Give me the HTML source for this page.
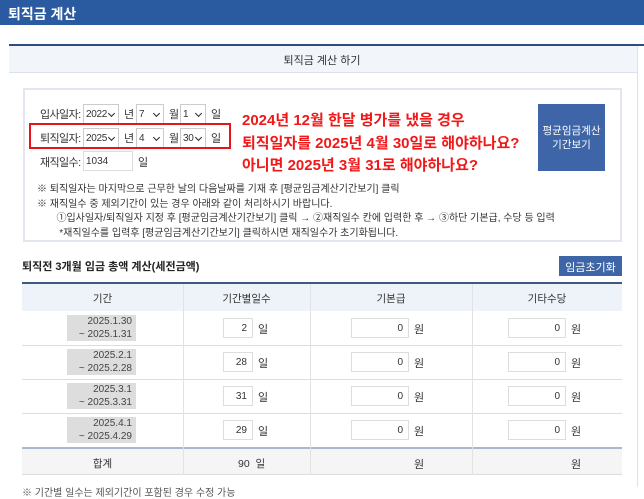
<!DOCTYPE html><html><head><meta charset="utf-8"><style>
*{margin:0;padding:0;box-sizing:border-box}
body{width:644px;height:487px;overflow:hidden;background:#fff;font-family:"Liberation Sans","Noto Sans CJK KR",sans-serif;color:#333;position:relative;font-size:11px}
.a{position:absolute;white-space:nowrap}
.lb{font-size:11px;letter-spacing:-0.6px}
.sel{position:absolute;height:20px;border:1px solid #ccc;background:#fff;font-size:10px;padding:4px 0 0 2px;color:#333;letter-spacing:-0.3px}
.sel:after{content:"";position:absolute;right:4px;top:6px;width:4px;height:4px;border-right:1.5px solid #222;border-bottom:1.5px solid #222;transform:rotate(45deg)}
.inp{position:absolute;height:20px;border:1px solid #ddd;background:#fff;text-align:right;padding:4px 5px 0 0;font-size:10px}
.pd{position:absolute;background:#ddd;font-size:10px;text-align:right;padding-right:4px;color:#444}
</style></head><body>
<div class="a" style="left:0;top:0;width:644px;height:25px;background:#2a5ba0"></div>
<div class="a" style="left:8px;top:4px;color:#fff;font-size:14px;font-weight:bold">퇴직금 계산</div>
<div class="a" style="left:9px;top:44px;width:635px;height:2px;background:#2c4e7e"></div>
<div class="a" style="left:9px;top:46px;width:628px;height:27px;background:#f2f5fa;border-bottom:1px solid #dde2ea"></div>
<div class="a" style="left:637px;top:46px;width:1px;height:441px;background:#dde2ea"></div>
<div class="a" style="left:0;top:52px;width:644px;text-align:center;font-size:11px">퇴직금 계산 하기</div>
<div class="a" style="left:23px;top:88px;width:599px;height:154px;border:2px solid #e2e6ef"></div>
<div class="a lb" style="left:40px;top:106px">입사일자:</div>
<div class="sel" style="left:83px;top:104px;width:36px">2022</div><div class="a" style="left:124px;top:106px">년</div>
<div class="sel" style="left:136px;top:104px;width:28px">7</div><div class="a" style="left:169px;top:106px">월</div>
<div class="sel" style="left:180px;top:104px;width:26px">1</div><div class="a" style="left:211px;top:106px">일</div>
<div class="a lb" style="left:40px;top:130px">퇴직일자:</div>
<div class="sel" style="left:83px;top:128px;width:36px">2025</div><div class="a" style="left:124px;top:130px">년</div>
<div class="sel" style="left:136px;top:128px;width:28px">4</div><div class="a" style="left:169px;top:130px">월</div>
<div class="sel" style="left:180px;top:128px;width:26px">30</div><div class="a" style="left:211px;top:130px">일</div>
<div class="a" style="left:29px;top:123px;width:202px;height:26px;border:2px solid #e8141c"></div>
<div class="a lb" style="left:40px;top:154px">재직일수:</div>
<div class="a" style="left:83px;top:151px;width:50px;height:20px;border:1px solid #ddd;font-size:10px;padding:4px 0 0 2px">1034</div>
<div class="a" style="left:138px;top:154px">일</div>
<div class="a" style="left:242px;top:110px;color:#f01818;font-weight:bold;font-size:15px;line-height:22.5px">2024년 12월 한달 병가를 냈을 경우<br>퇴직일자를 2025년 4월 30일로 해야하나요?<br>아니면 2025년 3월 31로 해야하나요?</div>
<div class="a" style="left:538px;top:104px;width:67px;height:67px;background:#3d65a8;color:#fff;font-size:10.5px;text-align:center;padding-top:20px;line-height:14px">평균임금계산<br>기간보기</div>
<div class="a" style="left:37px;top:183px;font-size:10px;line-height:14.5px;color:#333">※ 퇴직일자는 마지막으로 근무한 날의 다음날짜를 기재 후 [평균임금계산기간보기] 클릭<br>※ 재직일수 중 제외기간이 있는 경우 아래와 같이 처리하시기 바랍니다.<br>&nbsp;&nbsp;&nbsp;&nbsp;&nbsp;&nbsp;&nbsp;①입사일자/퇴직일자 지정 후 [평균임금계산기간보기] 클릭 → ②재직일수 칸에 입력한 후 → ③하단 기본급, 수당 등 입력<br>&nbsp;&nbsp;&nbsp;&nbsp;&nbsp;&nbsp;&nbsp;&nbsp;*재직일수를 입력후 [평균임금계산기간보기] 클릭하시면 재직일수가 초기화됩니다.</div>
<div class="a" style="left:22px;top:258px;font-size:11px;font-weight:bold;color:#222">퇴직전 3개월 임금 총액 계산(세전금액)</div>
<div class="a" style="left:559px;top:256px;width:63px;height:20px;background:#3d65a8;color:#fff;font-size:11px;text-align:center;padding-top:3px">임금초기화</div>
<div class="a" style="left:22px;top:282px;width:600px;height:2px;background:#3c5a80"></div>
<div class="a" style="left:22px;top:284px;width:600px;height:27px;background:#eef3fa"></div>
<div class="a" style="left:22px;top:447px;width:600px;height:28px;background:#f5f5f5;border-top:2px solid #a9b8cc;border-bottom:1px solid #ddd"></div>
<div class="a" style="left:22px;top:345px;width:600px;height:1px;background:#ddd"></div>
<div class="a" style="left:22px;top:379px;width:600px;height:1px;background:#ddd"></div>
<div class="a" style="left:22px;top:413px;width:600px;height:1px;background:#ddd"></div>
<div class="a" style="left:183px;top:284px;width:1px;height:191px;background:#e2e2e2"></div>
<div class="a" style="left:310px;top:284px;width:1px;height:191px;background:#e2e2e2"></div>
<div class="a" style="left:472px;top:284px;width:1px;height:191px;background:#e2e2e2"></div>
<div class="a" style="left:22px;top:291px;width:161px;text-align:center;font-size:10.5px">기간</div>
<div class="a" style="left:183px;top:291px;width:127px;text-align:center;font-size:10.5px">기간별일수</div>
<div class="a" style="left:310px;top:291px;width:162px;text-align:center;font-size:10.5px">기본급</div>
<div class="a" style="left:472px;top:291px;width:150px;text-align:center;font-size:10.5px">기타수당</div>

<div class="pd" style="left:67px;top:315px;width:69px;line-height:13px">2025.1.30<br>~ 2025.1.31</div>
<div class="inp" style="left:223px;top:318px;width:30px">2</div><div class="a" style="left:258px;top:321px">일</div>
<div class="inp" style="left:351px;top:318px;width:58px">0</div><div class="a" style="left:414px;top:321px">원</div>
<div class="inp" style="left:508px;top:318px;width:58px">0</div><div class="a" style="left:571px;top:321px">원</div>

<div class="pd" style="left:67px;top:349px;width:69px;line-height:13px">2025.2.1<br>~ 2025.2.28</div>
<div class="inp" style="left:223px;top:352px;width:30px">28</div><div class="a" style="left:258px;top:355px">일</div>
<div class="inp" style="left:351px;top:352px;width:58px">0</div><div class="a" style="left:414px;top:355px">원</div>
<div class="inp" style="left:508px;top:352px;width:58px">0</div><div class="a" style="left:571px;top:355px">원</div>

<div class="pd" style="left:67px;top:383px;width:69px;line-height:13px">2025.3.1<br>~ 2025.3.31</div>
<div class="inp" style="left:223px;top:386px;width:30px">31</div><div class="a" style="left:258px;top:389px">일</div>
<div class="inp" style="left:351px;top:386px;width:58px">0</div><div class="a" style="left:414px;top:389px">원</div>
<div class="inp" style="left:508px;top:386px;width:58px">0</div><div class="a" style="left:571px;top:389px">원</div>

<div class="pd" style="left:67px;top:417px;width:69px;line-height:13px">2025.4.1<br>~ 2025.4.29</div>
<div class="inp" style="left:223px;top:420px;width:30px">29</div><div class="a" style="left:258px;top:423px">일</div>
<div class="inp" style="left:351px;top:420px;width:58px">0</div><div class="a" style="left:414px;top:423px">원</div>
<div class="inp" style="left:508px;top:420px;width:58px">0</div><div class="a" style="left:571px;top:423px">원</div>

<div class="a" style="left:22px;top:456px;width:161px;text-align:center;font-size:10.5px">합계</div>
<div class="a" style="left:238px;top:456px;font-size:10.5px">90&nbsp;&nbsp;일</div>
<div class="a" style="left:414px;top:456px">원</div>
<div class="a" style="left:571px;top:456px">원</div>
<div class="a" style="left:22px;top:484px;font-size:10px;color:#555">※ 기간별 일수는 제외기간이 포함된 경우 수정 가능</div>
</body></html>
